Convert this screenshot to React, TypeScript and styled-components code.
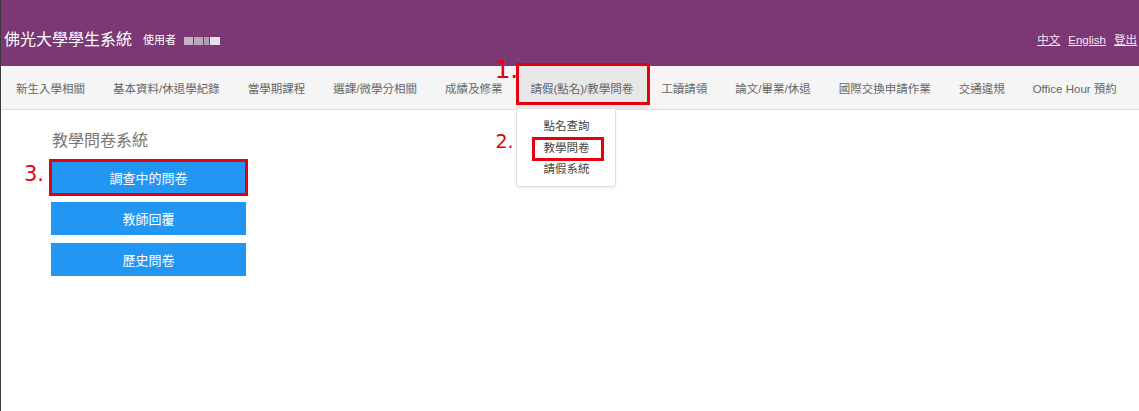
import React, { ReactElement } from 'react';
import styled, { createGlobalStyle } from 'styled-components';

const font = `"Liberation Sans", "Noto Sans CJK TC", sans-serif`;
const mark = '#e4000f';

const GlobalStyle = createGlobalStyle`
  html, body {
    margin: 0;
    padding: 0;
    background: #ffffff;
  }
  body {
    font-family: ${font};
  }
`;

const Page = styled.div`
  position: relative;
  min-height: 100vh;
  border-left: 1px solid #3a3a3a;
  box-sizing: border-box;
  background: #ffffff;
`;

const Header = styled.header`
  display: flex;
  align-items: center;
  justify-content: space-between;

  height: 66px;
  padding: 14px 2px 0 3px;
  box-sizing: border-box;

  background: #7b3874;
  color: #ffffff;
`;

const Brand = styled.div`
  display: flex;
  align-items: center;
`;

const Title = styled.span`
  font-size: 16px;
  line-height: 22px;
`;

const UserLabel = styled.span`
  margin-left: 11px;
  font-size: 11px;
  line-height: 14px;
`;

const Blur = styled.span<{ $shade: string; $w: number }>`
  display: inline-block;
  width: ${(p) => p.$w}px;
  height: 8px;
  background: ${(p) => p.$shade};
`;

const BlurGroup = styled.span`
  display: inline-flex;
  gap: 1px;
  margin-left: 8px;
  margin-top: 1px;
`;

const Links = styled.div`
  display: flex;
  gap: 8px;
`;

const TopLink = styled.a`
  color: #f4e6f2;
  font-size: 11.5px;
  line-height: 16px;
  text-decoration: underline;
  cursor: pointer;
`;

const Nav = styled.nav`
  display: flex;
  align-items: stretch;

  height: 44px;
  margin-left: 1px;
  box-sizing: border-box;

  background: #f5f5f5;
  border-bottom: 1px solid #dcdcdc;
  border-top-left-radius: 4px;
`;

const NavItem = styled.div<{ $active?: boolean }>`
  position: relative;
  display: flex;
  align-items: center;

  padding: 0 14px;

  background: ${(p) => (p.$active ? '#e7e7e7' : 'transparent')};
  color: #666666;
  font-size: 11.5px;
  white-space: nowrap;
`;

const ActiveBox = styled.span`
  position: absolute;
  top: -3px;
  bottom: 4px;
  left: 0;
  right: -3px;
  border: 3px solid ${mark};
`;

const Dropdown = styled.div`
  position: absolute;
  top: 100%;
  left: 0;
  z-index: 2;

  width: 100px;
  padding: 7px 0 5px;
  box-sizing: border-box;

  background: #ffffff;
  border: 1px solid #dedede;
  border-top: none;
  border-radius: 0 0 4px 4px;
  box-shadow: 0 2px 4px rgba(0, 0, 0, 0.06);
`;

const DropItem = styled.div`
  position: relative;
  height: 21.5px;
  line-height: 21.5px;
  text-align: center;

  color: #444444;
  font-size: 11.5px;
`;

const DropBox = styled.span`
  position: absolute;
  top: -1px;
  bottom: -2px;
  left: 15px;
  right: 11px;
  border: 3px solid ${mark};
`;

const Step = styled.span<{ $size: number }>`
  position: absolute;
  color: ${mark};
  font-family: "DejaVu Sans", sans-serif;
  font-size: ${(p) => p.$size}px;
  line-height: 1;
  white-space: nowrap;
`;

const StepOne = styled(Step)`
  top: -9px;
  left: -22px;
`;

const StepTwo = styled(Step)`
  top: 23px;
  left: -22px;
`;

const Main = styled.main`
  position: relative;
  display: flex;
  flex-direction: column;
  gap: 8px;

  padding: 20px 0 0 50px;
`;

const SectionTitle = styled.h2`
  margin: 0 0 1px 1px;

  color: #777777;
  font-size: 16px;
  font-weight: 400;
  line-height: 22px;
`;

const MenuButton = styled.button<{ $marked?: boolean }>`
  position: relative;
  width: 195px;
  height: 33px;
  padding: 0;

  border: none;
  background: #2196f3;
  color: #ffffff;
  font-family: ${font};
  font-size: 13px;
  cursor: pointer;

  outline: ${(p) => (p.$marked ? `3px solid ${mark}` : 'none')};
  outline-offset: -1px;
`;

const StepThree = styled(Step)`
  top: 3px;
  left: -27px;
`;

const navItems = [
  '新生入學相關',
  '基本資料/休退學紀錄',
  '當學期課程',
  '選課/微學分相關',
  '成績及修業',
  '請假(點名)/教學問卷',
  '工讀請領',
  '論文/畢業/休退',
  '國際交換申請作業',
  '交通違規',
  'Office Hour 預約',
];

const dropItems = ['點名查詢', '教學問卷', '請假系統'];

const buttons = ['調查中的問卷', '教師回覆', '歷史問卷'];

const App = (): ReactElement => {
  return (
    <Page>
      <GlobalStyle />
      <Header>
        <Brand>
          <Title>佛光大學學生系統</Title>
          <UserLabel>使用者</UserLabel>
          <BlurGroup>
            <Blur $shade="#c8b2c5" $w={9} />
            <Blur $shade="#bca4b9" $w={9} />
            <Blur $shade="#b39ab0" $w={5} />
            <Blur $shade="#e9dfe8" $w={10} />
          </BlurGroup>
        </Brand>
        <Links>
          <TopLink>中文</TopLink>
          <TopLink>English</TopLink>
          <TopLink>登出</TopLink>
        </Links>
      </Header>

      <Nav>
        {navItems.map((item, i) => {
          const active = i === 5;
          return (
            <NavItem key={item} $active={active}>
              {item}
              {active && (
                <>
                  <ActiveBox />
                  <StepOne $size={25}>1.</StepOne>
                  <Dropdown>
                    <StepTwo $size={19}>2.</StepTwo>
                    {dropItems.map((d, j) => (
                      <DropItem key={d}>
                        {d}
                        {j === 1 && <DropBox />}
                      </DropItem>
                    ))}
                  </Dropdown>
                </>
              )}
            </NavItem>
          );
        })}
      </Nav>

      <Main>
        <SectionTitle>教學問卷系統</SectionTitle>
        {buttons.map((b, i) => (
          <MenuButton key={b} $marked={i === 0}>
            {i === 0 && <StepThree $size={21}>3.</StepThree>}
            {b}
          </MenuButton>
        ))}
      </Main>
    </Page>
  );
};

export default App;
